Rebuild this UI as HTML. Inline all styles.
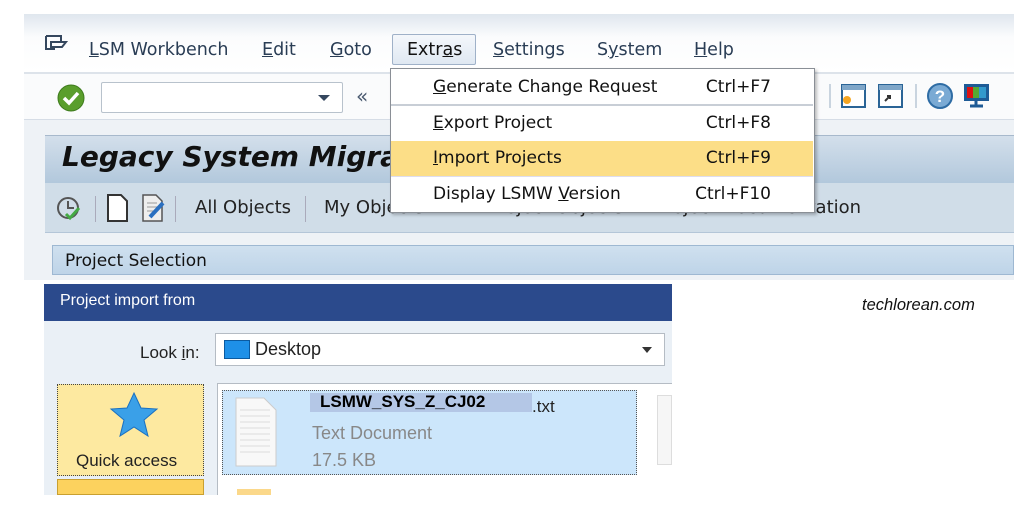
<!DOCTYPE html>
<html><head><meta charset="utf-8">
<style>
*{margin:0;padding:0;box-sizing:border-box}
body{width:1022px;height:515px;background:#fff;position:relative;overflow:hidden;font-family:Tahoma,"DejaVu Sans","Liberation Sans",sans-serif;color:#222}
.a{position:absolute}
u{text-decoration:underline}
.menu span{position:absolute;top:40px;font-size:17.5px;color:#2a3d55}
.dd div{position:absolute;left:0;width:422px;height:35px;font-size:17px;color:#111;line-height:35px}
.dd .l{position:absolute;left:42px}
.dd .r{position:absolute;right:42px}
</style></head><body>
<div class="a" style="left:24px;top:14px;width:990px;height:266px;background:#eef2f6"></div>
<div class="a" style="left:24px;top:14px;width:990px;height:58px;background:linear-gradient(#dfe6ee,#fbfcfd 40%,#fff)"></div>
<div class="a" style="left:24px;top:72px;width:990px;height:2px;background:#dde3ea"></div>
<div class="a" style="left:24px;top:74px;width:990px;height:46px;background:#fafbfc;border-bottom:1px solid #d6dde6"></div>
<svg class="a" style="left:44px;top:34px" width="26" height="20"><path d="M2 2h15v5M2 2v13h9M7 8h15l-4 5H7z" fill="none" stroke="#35475e" stroke-width="2"/></svg>
<div class="menu">
<span style="left:89px"><u>L</u>SM Workbench</span>
<span style="left:262px"><u>E</u>dit</span>
<span style="left:330px"><u>G</u>oto</span>
<span style="left:493px"><u>S</u>ettings</span>
<span style="left:597px">S<u>y</u>stem</span>
<span style="left:694px"><u>H</u>elp</span>
</div>
<div class="a" style="left:392px;top:34px;width:84px;height:31px;border:1px solid #9fb1c8;background:linear-gradient(#f4f7fb,#dfe8f2);border-radius:2px;font-size:17.5px;color:#111;padding:5px 0 0 14px">Extr<u>a</u>s</div>
<svg class="a" style="left:57px;top:84px" width="28" height="28"><circle cx="14" cy="14" r="13" fill="#5a9e2c" stroke="#3d7a1c"/><path d="M7 14l5 5 9-10" stroke="#fff" stroke-width="3.5" fill="none"/></svg>
<div class="a" style="left:101px;top:82px;width:242px;height:31px;background:#fff;border:1px solid #b8c2cc;border-radius:2px"></div>
<div class="a" style="left:318px;top:95px;width:0;height:0;border-left:6px solid transparent;border-right:6px solid transparent;border-top:6px solid #35475e"></div>
<div class="a" style="left:356px;top:84px;font-size:20px;color:#4a5a70">«</div>
<div class="a" style="left:829px;top:84px;width:2px;height:24px;background:#c9d4df"></div>
<svg class="a" style="left:840px;top:82px" width="28" height="28"><rect x="2" y="3" width="23" height="22" fill="#fff" stroke="#2a6496" stroke-width="2"/><rect x="2" y="3" width="23" height="5" fill="#7fa6c8"/><circle cx="7" cy="18" r="4" fill="#f5a623"/></svg>
<svg class="a" style="left:877px;top:82px" width="28" height="28"><rect x="2" y="3" width="23" height="22" fill="#fff" stroke="#2a6496" stroke-width="2"/><rect x="2" y="3" width="23" height="5" fill="#7fa6c8"/><path d="M8 19l5-5m-3 0h3v3" stroke="#333" stroke-width="2" fill="none"/></svg>
<div class="a" style="left:915px;top:84px;width:2px;height:24px;background:#c9d4df"></div>
<svg class="a" style="left:926px;top:82px" width="28" height="28"><circle cx="14" cy="14" r="12" fill="#7aaad4" stroke="#2e6ca4" stroke-width="2"/><text x="14" y="20" font-size="17" font-weight="bold" text-anchor="middle" fill="#fff" font-family="Liberation Sans">?</text></svg>
<svg class="a" style="left:962px;top:82px" width="30" height="28"><rect x="2" y="2" width="25" height="17" fill="#1e5b96"/><rect x="5" y="5" width="6" height="11" fill="#d11"/><rect x="11" y="5" width="6" height="11" fill="#5a3"/><rect x="17" y="5" width="7" height="11" fill="#39c"/><path d="M14 19v4M8 24h13" stroke="#1e5b96" stroke-width="3"/></svg>
<div class="a" style="left:45px;top:135px;width:969px;height:48px;background:linear-gradient(#d3dfeb,#b2c8dc);border-top:1px solid #a7b9cc"></div>
<div class="a" style="left:62px;top:140px;font-size:28px;font-weight:bold;font-style:italic;color:#111;font-family:Verdana,'DejaVu Sans',sans-serif">Legacy System Migration Workbench</div>
<div class="a" style="left:45px;top:183px;width:969px;height:50px;background:#d0dde8;border-bottom:1px solid #b4c6d8"></div>
<svg class="a" style="left:56px;top:196px" width="28" height="26"><circle cx="12" cy="12" r="10" fill="none" stroke="#555" stroke-width="2"/><path d="M12 5v7h6" stroke="#555" stroke-width="2" fill="none"/><path d="M10 18l4 4 9-10" stroke="#4a4" stroke-width="3" fill="none"/></svg>
<div class="a" style="left:95px;top:196px;width:1px;height:26px;background:#aab"></div>
<svg class="a" style="left:106px;top:193px" width="24" height="30"><path d="M2 2h13l6 6v20H2z" fill="#fff" stroke="#333" stroke-width="2"/></svg>
<svg class="a" style="left:141px;top:193px" width="26" height="30"><path d="M2 2h13l6 6v20H2z" fill="#eee" stroke="#555" stroke-width="1.5"/><path d="M6 10h10M6 14h10M6 18h10" stroke="#999"/><path d="M9 24l13-14" stroke="#2a6fc0" stroke-width="4"/></svg>
<div class="a" style="left:175px;top:196px;width:1px;height:26px;background:#aab"></div>
<div class="a" style="left:195px;top:197px;font-size:18px">All Objects</div>
<div class="a" style="left:305px;top:196px;width:1px;height:26px;background:#aab"></div>
<div class="a" style="left:324px;top:197px;font-size:18px">My Objects</div>
<div class="a" style="left:460px;top:197px;font-size:18px">All Project Objects</div>
<div class="a" style="left:655px;top:197px;font-size:18px">Project Documentation</div>
<div class="a" style="left:52px;top:245px;width:962px;height:30px;background:linear-gradient(#cfe0ef,#bed4e8);border:1px solid #9eb8d2"></div>
<div class="a" style="left:65px;top:251px;font-size:17px;color:#111">Project Selection</div>
<div class="a dd" style="left:390px;top:68px;width:425px;height:145px;background:#fff;border:1px solid #8a8f96;box-shadow:2px 2px 3px rgba(0,0,0,.25)">
<div style="top:1px"><span class="l"><u>G</u>enerate Change Request</span><span class="r">Ctrl+F7</span></div>
<div style="top:35px;height:2px;background:#c8ced6"></div>
<div style="top:37px"><span class="l"><u>E</u>xport Project</span><span class="r">Ctrl+F8</span></div>
<div style="top:72px;background:#fcde87"><span class="l"><u>I</u>mport Projects</span><span class="r">Ctrl+F9</span></div>
<div style="top:107px;border-top:1px solid #dde"><span class="l">Display LSMW <u>V</u>ersion</span><span class="r">Ctrl+F10</span></div>
</div>
<div class="a" style="left:44px;top:284px;width:628px;height:211px;background:#eaf0f6"></div>
<div class="a" style="left:44px;top:284px;width:628px;height:37px;background:#2b4a8c;color:#fff;font-size:16px;padding:8px 0 0 16px;font-family:'Liberation Sans',sans-serif">Project import from</div>
<div class="a" style="left:140px;top:343px;font-size:17px;font-family:'Liberation Sans',sans-serif">Look <u>i</u>n:</div>
<div class="a" style="left:215px;top:333px;width:450px;height:33px;background:#fff;border:1px solid #b5bcc4"></div>
<div class="a" style="left:224px;top:340px;width:26px;height:19px;background:#1e90e8;border:1px solid #0b5aa0"></div>
<div class="a" style="left:255px;top:339px;font-size:18px;font-family:'Liberation Sans',sans-serif">Desktop</div>
<div class="a" style="left:642px;top:347px;border-left:5px solid transparent;border-right:5px solid transparent;border-top:6px solid #333"></div>
<div class="a" style="left:57px;top:384px;width:147px;height:92px;background:#fde9a0;border:1px dotted #444"></div>
<svg class="a" style="left:106px;top:390px" width="54" height="50"><path d="M28 3l7 15 16 1-13 11 4 16-14-9-14 9 4-16L5 19l16-1z" fill="#3aa0e8" stroke="#1a70c0"/></svg>
<div class="a" style="left:76px;top:451px;font-size:17px;font-family:'Liberation Sans',sans-serif">Quick access</div>
<div class="a" style="left:57px;top:479px;width:147px;height:16px;background:#fcd25e;border:1px solid #c9a030"></div>
<div class="a" style="left:217px;top:383px;width:455px;height:112px;background:#fff;border-left:1px solid #b5bcc4;border-top:1px solid #b5bcc4"></div>
<div class="a" style="left:222px;top:390px;width:415px;height:85px;background:#cce6fb;border:1px dotted #555"></div>
<svg class="a" style="left:234px;top:396px" width="44" height="72"><path d="M2 2h28l12 12v56H2z" fill="#f8f8f8" stroke="#ccc"/><path d="M6 14h30M6 20h30M6 26h30M6 32h30M6 38h30M6 44h30M6 50h30M6 56h30" stroke="#ddd"/></svg>
<div class="a" style="left:310px;top:393px;width:222px;height:19px;background:#b4c7e6"></div>
<div class="a" style="left:320px;top:392px;font-size:17px;font-weight:bold;font-family:'Liberation Sans',sans-serif;color:#000">LSMW_SYS_Z_CJ02</div>
<div class="a" style="left:532px;top:397px;font-size:17px;font-family:'Liberation Sans',sans-serif">.txt</div>
<div class="a" style="left:312px;top:423px;font-size:18px;color:#888;font-family:'Liberation Sans',sans-serif">Text Document</div>
<div class="a" style="left:312px;top:450px;font-size:18px;color:#888;font-family:'Liberation Sans',sans-serif">17.5 KB</div>
<div class="a" style="left:237px;top:489px;width:34px;height:6px;background:#fbd88a"></div>
<div class="a" style="left:657px;top:395px;width:15px;height:70px;background:#f6f6f6;border:1px solid #ddd"></div>
<div class="a" style="left:862px;top:296px;font-size:16.5px;font-style:italic;font-family:'Liberation Sans',sans-serif;color:#111">techlorean.com</div>
</body></html>
